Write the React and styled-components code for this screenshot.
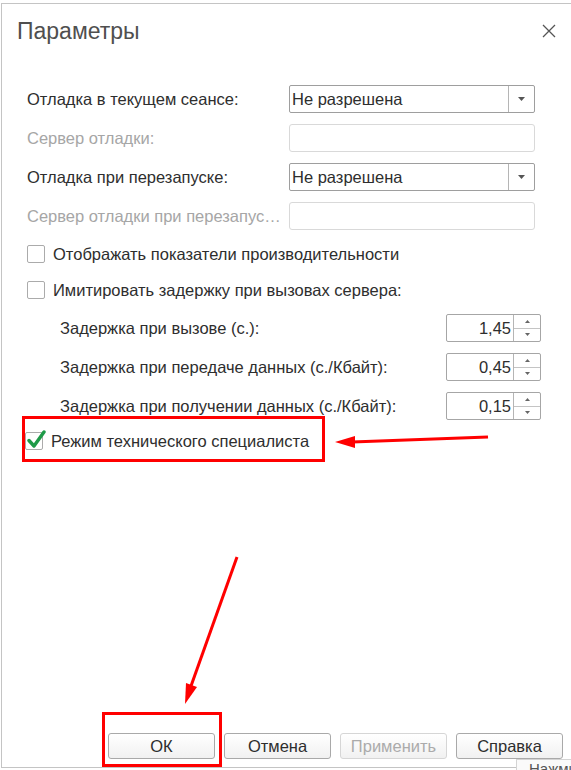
import React from 'react'
import styled, { createGlobalStyle } from 'styled-components'

const GlobalStyle = createGlobalStyle`
  html, body {
    margin: 0;
    padding: 0;
    background: #ffffff;
    overflow: hidden;
  }
  body {
    font-family: 'Liberation Sans', Arial, sans-serif;
  }
`

const delays = [
  { label: 'Задержка при вызове (с.):', value: '1,45' },
  { label: 'Задержка при передаче данных (с./Кбайт):', value: '0,45' },
  { label: 'Задержка при получении данных (с./Кбайт):', value: '0,15' },
]

const Caret = ({ up }) => (
  <svg width="7" height="4" viewBox="0 0 7 4">
    <polygon points={up ? '0,4 7,4 3.5,0' : '0,0 7,0 3.5,4'} fill="#555" />
  </svg>
)

const TinyCaret = ({ up }) => (
  <svg width="5" height="3" viewBox="0 0 5 3">
    <polygon points={up ? '0,3 5,3 2.5,0' : '0,0 5,0 2.5,3'} fill="#666" />
  </svg>
)

const Select = ({ value }) => (
  <SelectBox>
    <SelectValue>{value}</SelectValue>
    <SelectButton><Caret /></SelectButton>
  </SelectBox>
)

const Spinner = ({ value }) => (
  <SpinBox>
    <SpinValue>{value}</SpinValue>
    <SpinButtons>
      <SpinHalf><TinyCaret up /></SpinHalf>
      <SpinHalf $bottom><TinyCaret /></SpinHalf>
    </SpinButtons>
  </SpinBox>
)

const CheckBox = ({ checked }) => (
  <Box>
    {checked && (
      <CheckMark width="20" height="20" viewBox="0 0 20 20">
        <path d="M3 10.5 L8 16 L18 2" fill="none" stroke="#1e9a48" strokeWidth="3.4" strokeLinecap="round" strokeLinejoin="round" />
      </CheckMark>
    )}
  </Box>
)

class App extends React.Component {
  render() {
    return (
      <Page>
        <GlobalStyle />
        <Window>
          <Header>
            <Title>Параметры</Title>
            <Close width="14" height="14" viewBox="0 0 14 14">
              <path d="M1 1 L13 13 M13 1 L1 13" stroke="#555" strokeWidth="1.3" />
            </Close>
          </Header>

          <Form>
            <FieldGrid>
              <Label>Отладка в текущем сеансе:</Label>
              <Select value="Не разрешена" />
              <Label $muted>Сервер отладки:</Label>
              <TextInput />
              <Label>Отладка при перезапуске:</Label>
              <Select value="Не разрешена" />
              <Label $muted>Сервер отладки при перезапус…</Label>
              <TextInput />
            </FieldGrid>

            <CheckRow $top={14}>
              <CheckBox />
              <CheckLabel>Отображать показатели производительности</CheckLabel>
            </CheckRow>
            <CheckRow $top={16}>
              <CheckBox />
              <CheckLabel>Имитировать задержку при вызовах сервера:</CheckLabel>
            </CheckRow>

            <DelayList>
              {delays.map(d => (
                <DelayRow key={d.label}>
                  <Label>{d.label}</Label>
                  <Spinner value={d.value} />
                </DelayRow>
              ))}
            </DelayList>

            <CheckRow $top={11} $shift={-2}>
              <CheckBox checked />
              <CheckLabel>Режим технического специалиста</CheckLabel>
            </CheckRow>
          </Form>

          <Footer>
            <Button>ОК</Button>
            <Button>Отмена</Button>
            <Button disabled>Применить</Button>
            <Button>Справка</Button>
          </Footer>
        </Window>

        <Hint>Нажмите</Hint>

        <Marker $x={22} $y={416} $w={303} $h={46} />
        <Marker $x={102} $y={712} $w={120} $h={55} />
        <Arrows width="571" height="770" viewBox="0 0 571 770">
          <line x1="488" y1="437" x2="352" y2="442" stroke="#f00" strokeWidth="3" />
          <polygon points="335,442 355,436 355,448" fill="#f00" />
          <line x1="237" y1="557" x2="191" y2="686" stroke="#f00" strokeWidth="3" />
          <polygon points="185,704 186,683 197,687" fill="#f00" />
        </Arrows>
      </Page>
    )
  }
}

const Page = styled.div`
  position: relative;
  width: 571px;
  height: 770px;
  overflow: hidden;
  color: #333333;
  font-size: 16.5px;
`

const Window = styled.div`
  margin: 3px 0 0 1px;
  width: 620px;
  height: 763px;
  border: 1px solid #c4c4c4;
  display: flex;
  flex-direction: column;
  background: #ffffff;
`

const Header = styled.div`
  display: flex;
  align-items: center;
  width: 554px;
  padding: 14px 0 0 15px;
  box-sizing: border-box;
  height: 40px;
`

const Title = styled.div`
  flex: 1;
  font-size: 23px;
  line-height: 26px;
  color: #4f4f4f;
`

const Close = styled.svg`
  margin-top: 0px;
`

const Form = styled.div`
  flex: 1;
  display: flex;
  flex-direction: column;
  padding: 41px 0 0 25px;
`

const FieldGrid = styled.div`
  display: grid;
  grid-template-columns: 262px 246px;
  grid-auto-rows: 28px;
  row-gap: 11px;
  align-items: center;
`

const Label = styled.div`
  color: ${p => (p.$muted ? '#a6a6a6' : '#2e2e2e')};
  line-height: 28px;
  white-space: nowrap;
`

const SelectBox = styled.div`
  display: flex;
  height: 28px;
  box-sizing: border-box;
  border: 1px solid #9e9e9e;
  border-radius: 2px;
`

const SelectValue = styled.div`
  flex: 1;
  padding-left: 2px;
  line-height: 26px;
  color: #2e2e2e;
`

const SelectButton = styled.div`
  width: 25px;
  border-left: 1px solid #b5b5b5;
  display: flex;
  align-items: center;
  justify-content: center;
`

const TextInput = styled.div`
  height: 28px;
  box-sizing: border-box;
  border: 1px solid #d9d9d9;
  border-radius: 3px;
`

const CheckRow = styled.div`
  display: flex;
  align-items: center;
  gap: 8px;
  height: 20px;
  margin-top: ${p => p.$top}px;
  margin-left: ${p => p.$shift || 0}px;
`

const Box = styled.div`
  position: relative;
  width: 18px;
  height: 18px;
  box-sizing: border-box;
  border: 1px solid #ababab;
  border-radius: 2px;
  background: #ffffff;
`

const CheckMark = styled.svg`
  position: absolute;
  left: 0px;
  top: -3px;
`

const CheckLabel = styled.div`
  color: #2e2e2e;
  white-space: nowrap;
`

const DelayList = styled.div`
  display: flex;
  flex-direction: column;
  gap: 11px;
  margin-top: 14px;
  width: 514px;
  padding-left: 33px;
  box-sizing: border-box;
`

const DelayRow = styled.div`
  display: flex;
  align-items: center;
  justify-content: space-between;
  height: 28px;
`

const SpinBox = styled.div`
  display: flex;
  width: 95px;
  height: 28px;
  box-sizing: border-box;
  border: 1px solid #a6a6a6;
  border-radius: 2px;
`

const SpinValue = styled.div`
  flex: 1;
  text-align: right;
  padding-right: 2px;
  line-height: 26px;
  color: #2e2e2e;
`

const SpinButtons = styled.div`
  width: 26px;
  border-left: 1px solid #b5b5b5;
  display: flex;
  flex-direction: column;
`

const SpinHalf = styled.div`
  flex: 1;
  display: flex;
  align-items: center;
  justify-content: center;
  border-top: ${p => (p.$bottom ? '1px solid #c4c4c4' : 'none')};
`

const Footer = styled.div`
  position: relative;
  z-index: 1;
  display: flex;
  gap: 9px;
  padding: 0 0 8px 106px;
`

const Button = styled.button`
  width: 107px;
  height: 26px;
  box-sizing: border-box;
  border: 1px solid ${p => (p.disabled ? '#d6d6d6' : '#a9a9a9')};
  border-radius: 3px;
  background: linear-gradient(#ffffff, #f1f1f1);
  font-family: 'Liberation Sans', Arial, sans-serif;
  font-size: 16.5px;
  color: ${p => (p.disabled ? '#ababab' : '#2e2e2e')};
  padding: 0;
`

const Hint = styled.div`
  position: absolute;
  left: 516px;
  top: 759px;
  width: 80px;
  height: 30px;
  box-sizing: border-box;
  border: 1px solid #d4d4d4;
  background: #fafafa;
  padding: 1px 0 0 12px;
  color: #555555;
  font-size: 15px;
  line-height: 16px;
`

const Marker = styled.div`
  position: absolute;
  z-index: 2;
  left: ${p => p.$x}px;
  top: ${p => p.$y}px;
  width: ${p => p.$w}px;
  height: ${p => p.$h}px;
  box-sizing: border-box;
  border: 3px solid #ff0000;
`

const Arrows = styled.svg`
  position: absolute;
  z-index: 2;
  left: 0;
  top: 0;
  pointer-events: none;
`

export default App
